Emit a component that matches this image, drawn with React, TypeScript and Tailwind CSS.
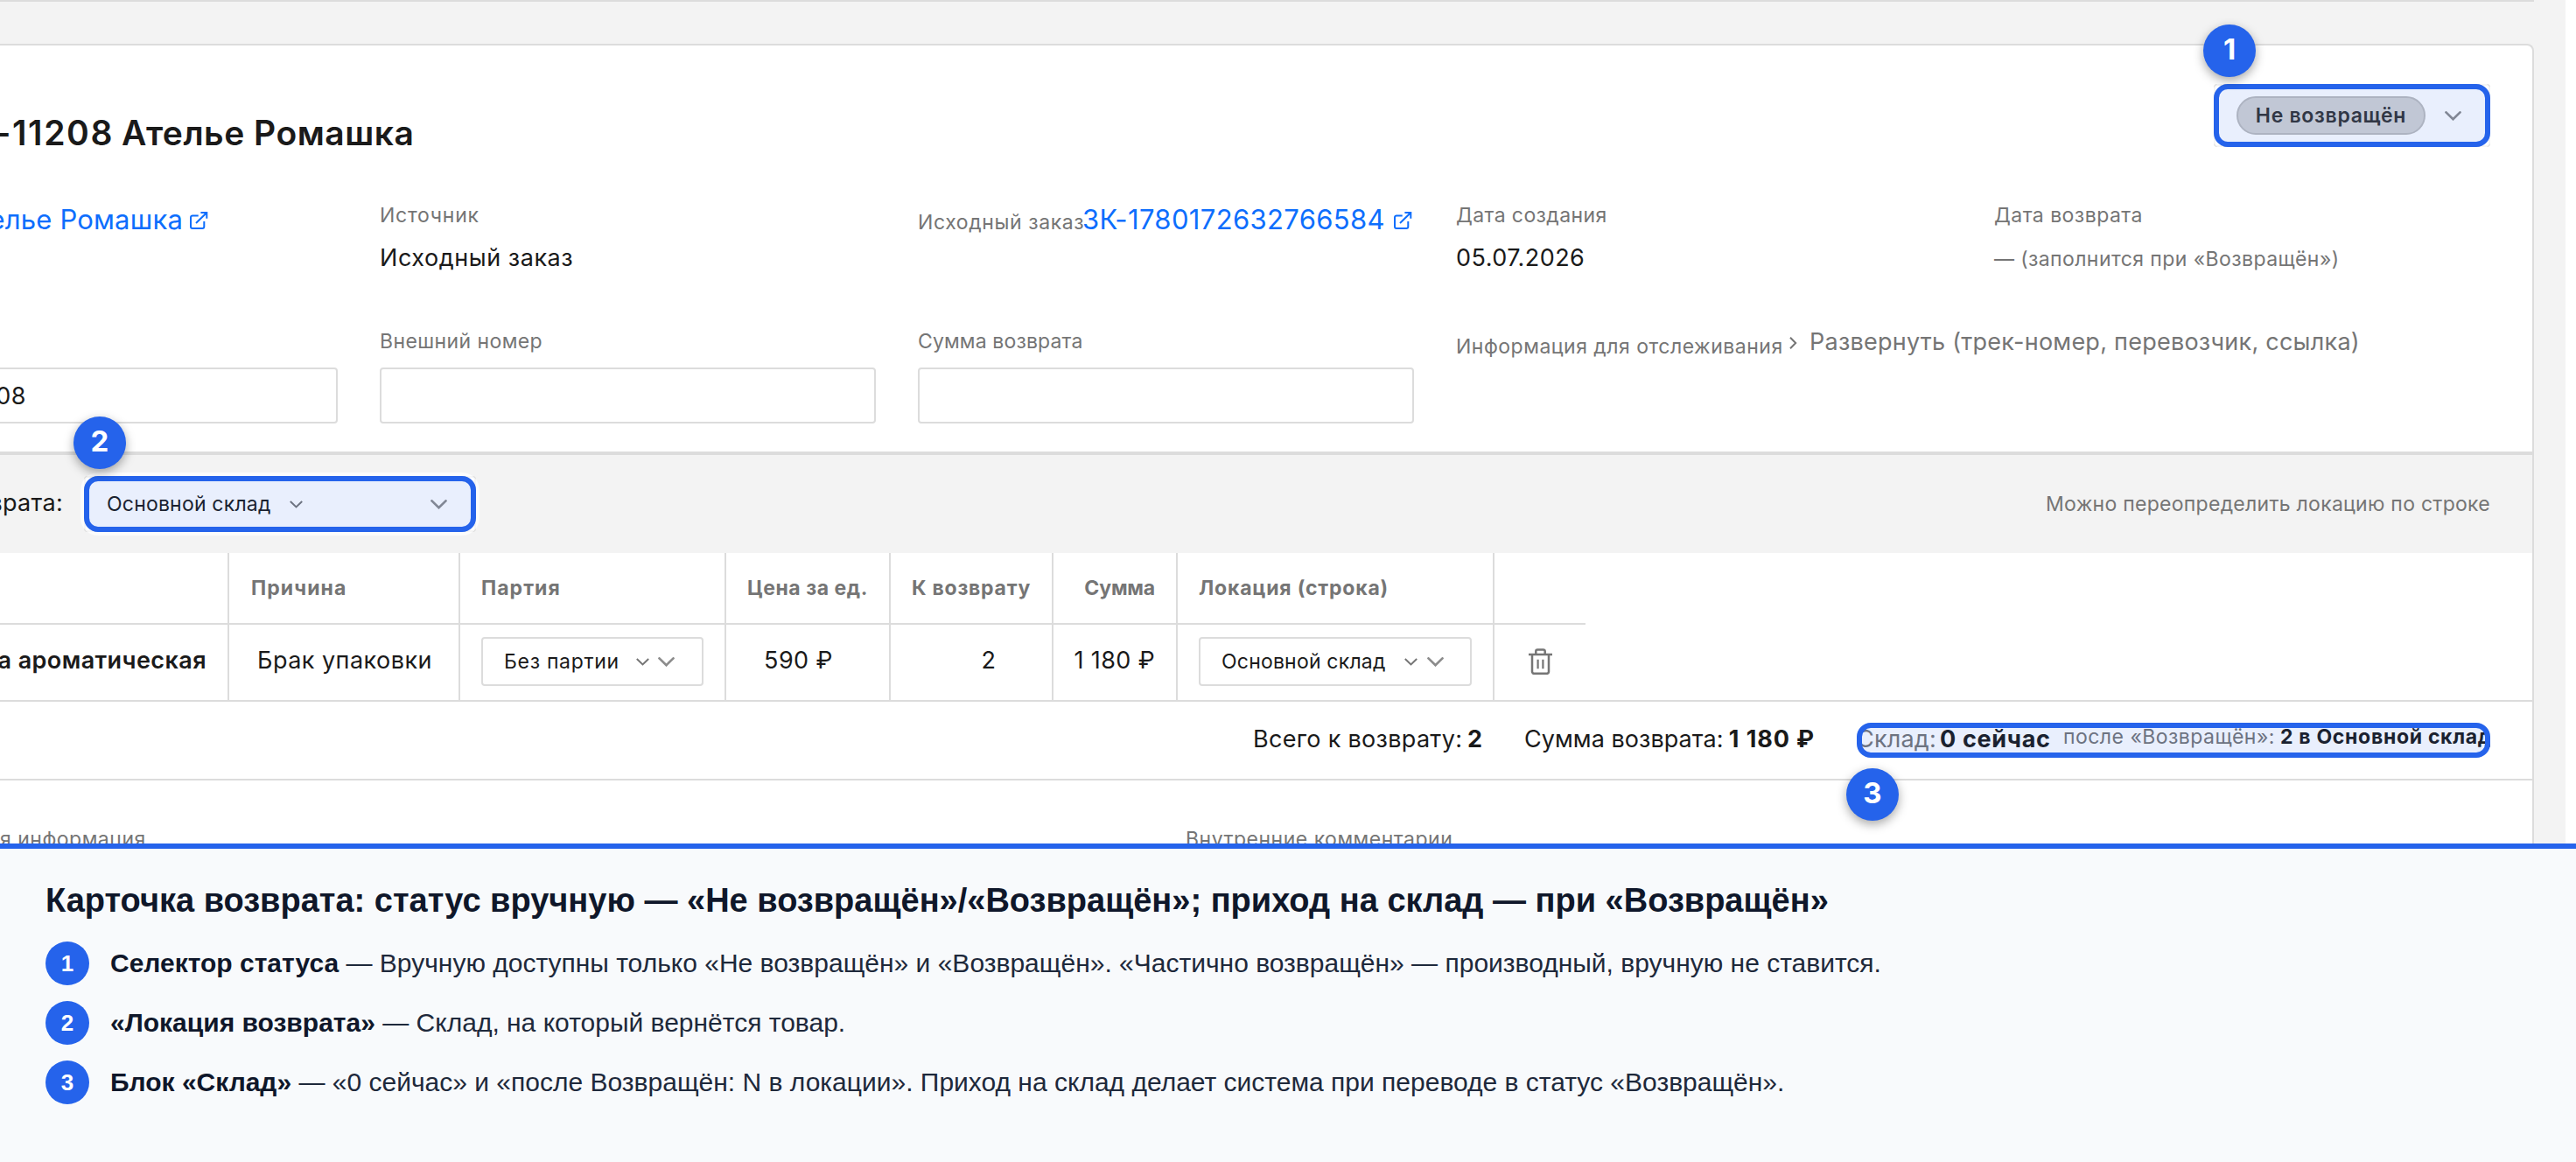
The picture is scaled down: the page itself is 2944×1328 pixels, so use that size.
import type { ReactNode } from 'react';

const columns = 'grid w-[1812px] grid-cols-[262px_264px_304px_188px_186px_142px_362px_104px]';

function ExternalIcon() {
  return (
    <svg className="h-[21px] w-[21px]" viewBox="0 0 21 21" fill="none" stroke="currentColor" strokeWidth="2">
      <path d="M9.7 4.4H3a2 2 0 0 0-2 2V17a2 2 0 0 0 2 2h11.3a2 2 0 0 0 2-2v-6M12.4 1h6.9v6.8M19.3 1 7 13" />
    </svg>
  );
}

function SmallChevron() {
  return (
    <svg className="h-[9px] w-[15px] shrink-0 text-[#757575]" viewBox="0 0 15 9" fill="none" stroke="currentColor" strokeWidth="2">
      <path d="M.8 1.1l6.7 6.3 6.7-6.3" />
    </svg>
  );
}

function BigChevron() {
  return (
    <svg className="h-[11px] w-[19px] shrink-0 text-[#8c8c8c]" viewBox="0 0 19 11" fill="none" stroke="currentColor" strokeWidth="2.7" strokeLinecap="round">
      <path d="M1.5 1.4l8 7.8 8-7.8" />
    </svg>
  );
}

function TrashIcon() {
  return (
    <svg className="h-[30px] w-[27px] text-[#757575]" viewBox="0 0 27 30" fill="none" stroke="currentColor" strokeWidth="2.5">
      <path d="M0 7h27M8.3 7V3.2a1.8 1.8 0 0 1 1.8-1.8h6.8a1.8 1.8 0 0 1 1.8 1.8V7M4 7v19.6a2.2 2.2 0 0 0 2.2 2.2h14.6a2.2 2.2 0 0 0 2.2-2.2V7" />
      <path d="M10.6 12.8v10.4M16.4 12.8v10.4" strokeWidth="2.2" />
    </svg>
  );
}

// blue frame over a highlighted element
function Highlight() {
  return <div className="absolute inset-0 rounded-2xl border-6 border-[#2563eb] bg-[#2563eb]/10 shadow-[0_0_0_4px_rgba(255,255,255,0.7)]" />;
}

function Badge({ n, className }: { n: number; className: string }) {
  return (
    <div className={`absolute z-10 flex h-[60px] w-[60px] items-center justify-center rounded-full bg-[#2563eb] pb-1 text-[33px] font-bold text-white shadow-[0_4px_12px_rgba(0,0,0,0.35)] ${className}`}>
      {n}
    </div>
  );
}

function Label({ children, className = '' }: { children: ReactNode; className?: string }) {
  return <div className={`text-[23px] whitespace-nowrap text-[#757575] ${className}`}>{children}</div>;
}

function Cell({ children, className = '' }: { children?: ReactNode; className?: string }) {
  return <div className={`flex items-center border-r-2 border-[#dcdcdc] whitespace-nowrap ${className}`}>{children}</div>;
}

function Legend({ n, title, children }: { n: number; title: string; children: ReactNode }) {
  return (
    <li className="flex items-center gap-6">
      <span className="flex h-[50px] w-[50px] items-center justify-center rounded-full bg-[#2563eb] text-[26px] font-bold text-white">{n}</span>
      <span className="text-[30px] leading-[34px] whitespace-nowrap text-[#1e293b]">
        <b className="text-[#0f172a]">{title}</b> — {children}
      </span>
    </li>
  );
}

function App() {
  return (
    <div className="flex h-[1328px] w-[2944px] flex-col overflow-hidden bg-white font-['Inter',sans-serif] text-[27px] leading-[normal] text-[#1a1a1a]">
      <div className="h-[964px] w-[2932px] overflow-hidden bg-[#f3f3f3]">
        <div className="h-[50px] w-[2896px] border-t-2 border-[#dcdcdc]"></div>
        <div className="h-[930px] w-[2896px] rounded-tr-lg border-t-2 border-r-2 border-[#dcdcdc] bg-white">
          {/* title and status */}
          <div className="flex h-[116px] items-end justify-between pr-12">
            <h1 className="-mb-[7px] flex text-[39px] font-semibold whitespace-nowrap">
              <span className="flex w-[139px] justify-end pr-[9px] tracking-[1.6px]">-11208</span>
              <span className="tracking-[0.5px]">Ателье Ромашка</span>
            </h1>
            <div className="relative flex h-[72px] w-[316px] items-center rounded-sm border-2 border-[#dcdcdc] pl-6">
              <div className="flex h-11 w-[216px] items-center justify-center rounded-full border-2 border-[#bdbdbd] bg-[#d3d3d3] text-[23px] font-semibold tracking-[0.7px] text-[#333]">
                Не возвращён
              </div>
              <div className="ml-[22px]"><BigChevron /></div>
              <div className="absolute -inset-[2px]"><Highlight /></div>
              <Badge n={1} className="-top-[70px] -left-[14px]" />
            </div>
          </div>

          {/* fields */}
          <div className="-ml-[181px] grid w-[3027px] grid-cols-5 grid-rows-[144px_140px] gap-x-12 pt-16">
            <div className="flex items-start text-[31px] whitespace-nowrap text-[#0d6efd]">
              <span className="flex w-[390px] justify-end tracking-[0.2px]">Ателье Ромашка</span>
              <span className="mt-[10px] ml-2"><ExternalIcon /></span>
            </div>
            <div>
              <Label className="tracking-[0.74px]">Источник</Label>
              <div className="mt-[18px] tracking-[0.55px]">Исходный заказ</div>
            </div>
            <div className="flex items-start text-[31px] whitespace-nowrap text-[#0d6efd]">
              <Label className="mt-2 w-[188px] tracking-[0.6px]">Исходный заказ</Label>
              <span className="tracking-[0.35px]">ЗК-1780172632766584</span>
              <span className="mt-[10px] ml-[10px]"><ExternalIcon /></span>
            </div>
            <div>
              <Label className="tracking-[0.4px]">Дата создания</Label>
              <div className="mt-[18px] tracking-[0.46px]">05.07.2026</div>
            </div>
            <div>
              <Label className="tracking-[0.46px]">Дата возврата</Label>
              <Label className="mt-[22px] tracking-[0.43px]">— (заполнится при «Возвращён»)</Label>
            </div>
            <div>
              <div className="mt-11 flex h-16 items-center rounded-sm border-2 border-[#dcdcdc]">
                <span className="flex w-[209px] justify-end tracking-[0.5px]">11208</span>
              </div>
            </div>
            <div>
              <Label className="tracking-[0.4px]">Внешний номер</Label>
              <div className="mt-4 h-16 rounded-sm border-2 border-[#dcdcdc]"></div>
            </div>
            <div>
              <Label className="tracking-[0.14px]">Сумма возврата</Label>
              <div className="mt-4 h-16 rounded-sm border-2 border-[#dcdcdc]"></div>
            </div>
            <div className="flex items-start">
              <Label className="mt-[6px] w-[381px] shrink-0 tracking-[0.5px]">Информация для отслеживания</Label>
              <svg className="mt-[9px] h-[14px] w-[9px] shrink-0" viewBox="0 0 9 14" fill="none" stroke="#757575" strokeWidth="2">
                <path d="M1 .7L7.2 7 1 13.3" />
              </svg>
              <span className="-mt-[2px] ml-[14px] tracking-[0.25px] whitespace-nowrap text-[#757575]">Развернуть (трек-номер, перевозчик, ссылка)</span>
            </div>
          </div>

          {/* return location */}
          <div className="flex h-[116px] items-center justify-between border-t-4 border-[#dcdcdc] bg-[#f3f3f3] pr-12">
            <div className="flex items-center">
              <span className="flex w-[72px] justify-end pb-[3px] tracking-[0.3px]">возврата:</span>
              <div className="relative ml-6 flex h-16 w-[448px] items-center rounded-sm border-2 border-[#dcdcdc] bg-white pr-[31px] pl-6">
                <span className="w-[209px] text-[23px] tracking-[0.2px]">Основной склад</span>
                <SmallChevron />
                <div className="ml-auto"><BigChevron /></div>
                <div className="absolute -inset-[2px]"><Highlight /></div>
                <Badge n={2} className="-top-[70px] -left-[14px]" />
              </div>
            </div>
            <Label className="tracking-[0.27px]">Можно переопределить локацию по строке</Label>
          </div>

          {/* items */}
          <div className={`${columns} h-[82px] border-b-2 border-[#dcdcdc] text-[23px] font-bold text-[#757575]`}>
            <Cell />
            <Cell className="pl-[25px] tracking-[1.08px]">Причина</Cell>
            <Cell className="pl-6 tracking-[1.04px]">Партия</Cell>
            <Cell className="pl-6 tracking-[0.55px]">Цена за ед.</Cell>
            <Cell className="pl-6 tracking-[0.76px]">К возврату</Cell>
            <Cell className="justify-end pr-6 tracking-[-0.2px]">Сумма</Cell>
            <Cell className="pl-6 tracking-[0.8px]">Локация (строка)</Cell>
          </div>
          <div className={`${columns} h-[86px]`}>
            <Cell className="justify-end pr-6 pb-[5px] font-semibold tracking-[0.41px]">а ароматическая</Cell>
            <Cell className="pb-[5px] pl-8 tracking-[0.47px]">Брак упаковки</Cell>
            <Cell className="pb-[2px] pl-6">
              <div className="flex h-14 w-[254px] items-center rounded-sm border-2 border-[#dcdcdc] pl-6 text-[23px] tracking-[0.7px]">
                <span className="w-[151px]">Без партии</span>
                <SmallChevron />
                <div className="ml-[10px]"><BigChevron /></div>
              </div>
            </Cell>
            <Cell className="justify-end pr-16 pb-[5px] tracking-[0.45px]">590 ₽</Cell>
            <Cell className="justify-end pr-16 pb-[5px]">2</Cell>
            <Cell className="justify-end pr-6 pb-[5px] tracking-[0.4px]">1 180 ₽</Cell>
            <Cell className="pb-[2px] pl-6">
              <div className="flex h-14 w-[312px] items-center rounded-sm border-2 border-[#dcdcdc] pl-6 text-[23px] tracking-[0.2px]">
                <span className="w-[209px]">Основной склад</span>
                <SmallChevron />
                <div className="ml-[11px]"><BigChevron /></div>
              </div>
            </Cell>
            <div className="flex items-center pb-[2px] pl-[39px]"><TrashIcon /></div>
          </div>

          {/* totals */}
          <div className="flex h-[92px] items-start justify-end gap-12 border-y-2 border-[#dcdcdc] pt-6 pr-12 whitespace-nowrap">
            <div className="mt-[2px] flex w-[262px] justify-between">
              <span className="tracking-[0.3px]">Всего к возврату:</span>
              <b>2</b>
            </div>
            <div className="mt-[2px] flex w-[332px] justify-between">
              <span className="tracking-[0.05px]">Сумма возврата:</span>
              <b className="tracking-[0.9px]">1 180 ₽</b>
            </div>
            <div className="relative flex h-10 w-[724px] items-start">
              <div className="flex h-10 w-[724px] items-start overflow-hidden pt-[2px]">
                <span className="w-[95px] shrink-0 tracking-[0.2px] text-[#757575]">Склад:</span>
                <b className="w-[141px] shrink-0 tracking-[0.67px]">0 сейчас</b>
                <span className="w-[248px] shrink-0 text-[23px] tracking-[0.47px] text-[#757575]">после «Возвращён»:</span>
                <b className="text-[23px] tracking-[0.7px]">2 в Основной склад</b>
              </div>
              <Highlight />
              <Badge n={3} className="top-[52px] -left-3" />
            </div>
          </div>

          <div className="flex pt-[53px]">
            <Label className="w-[1355px] tracking-[0.5px]">я информация</Label>
            <Label className="tracking-[0.5px]">Внутренние комментарии</Label>
          </div>
        </div>
      </div>

      <div className="relative z-20 h-[364px] border-t-6 border-[#2563eb] bg-[#f8fafc] px-[52px] pt-[37px] font-['Liberation_Sans',Arial,sans-serif]">
        <h2 className="text-[38px] leading-[44px] font-bold whitespace-nowrap text-[#0f172a]">
          Карточка возврата: статус вручную — «Не возвращён»/«Возвращён»; приход на склад — при «Возвращён»
        </h2>
        <ul className="mt-[25px] flex flex-col gap-[18px]">
          <Legend n={1} title="Селектор статуса">
            Вручную доступны только «Не возвращён» и «Возвращён». «Частично возвращён» — производный, вручную не ставится.
          </Legend>
          <Legend n={2} title="«Локация возврата»">Склад, на который вернётся товар.</Legend>
          <Legend n={3} title="Блок «Склад»">
            «0 сейчас» и «после Возвращён: N в локации». Приход на склад делает система при переводе в статус «Возвращён».
          </Legend>
        </ul>
      </div>
    </div>
  );
}

export default App;
